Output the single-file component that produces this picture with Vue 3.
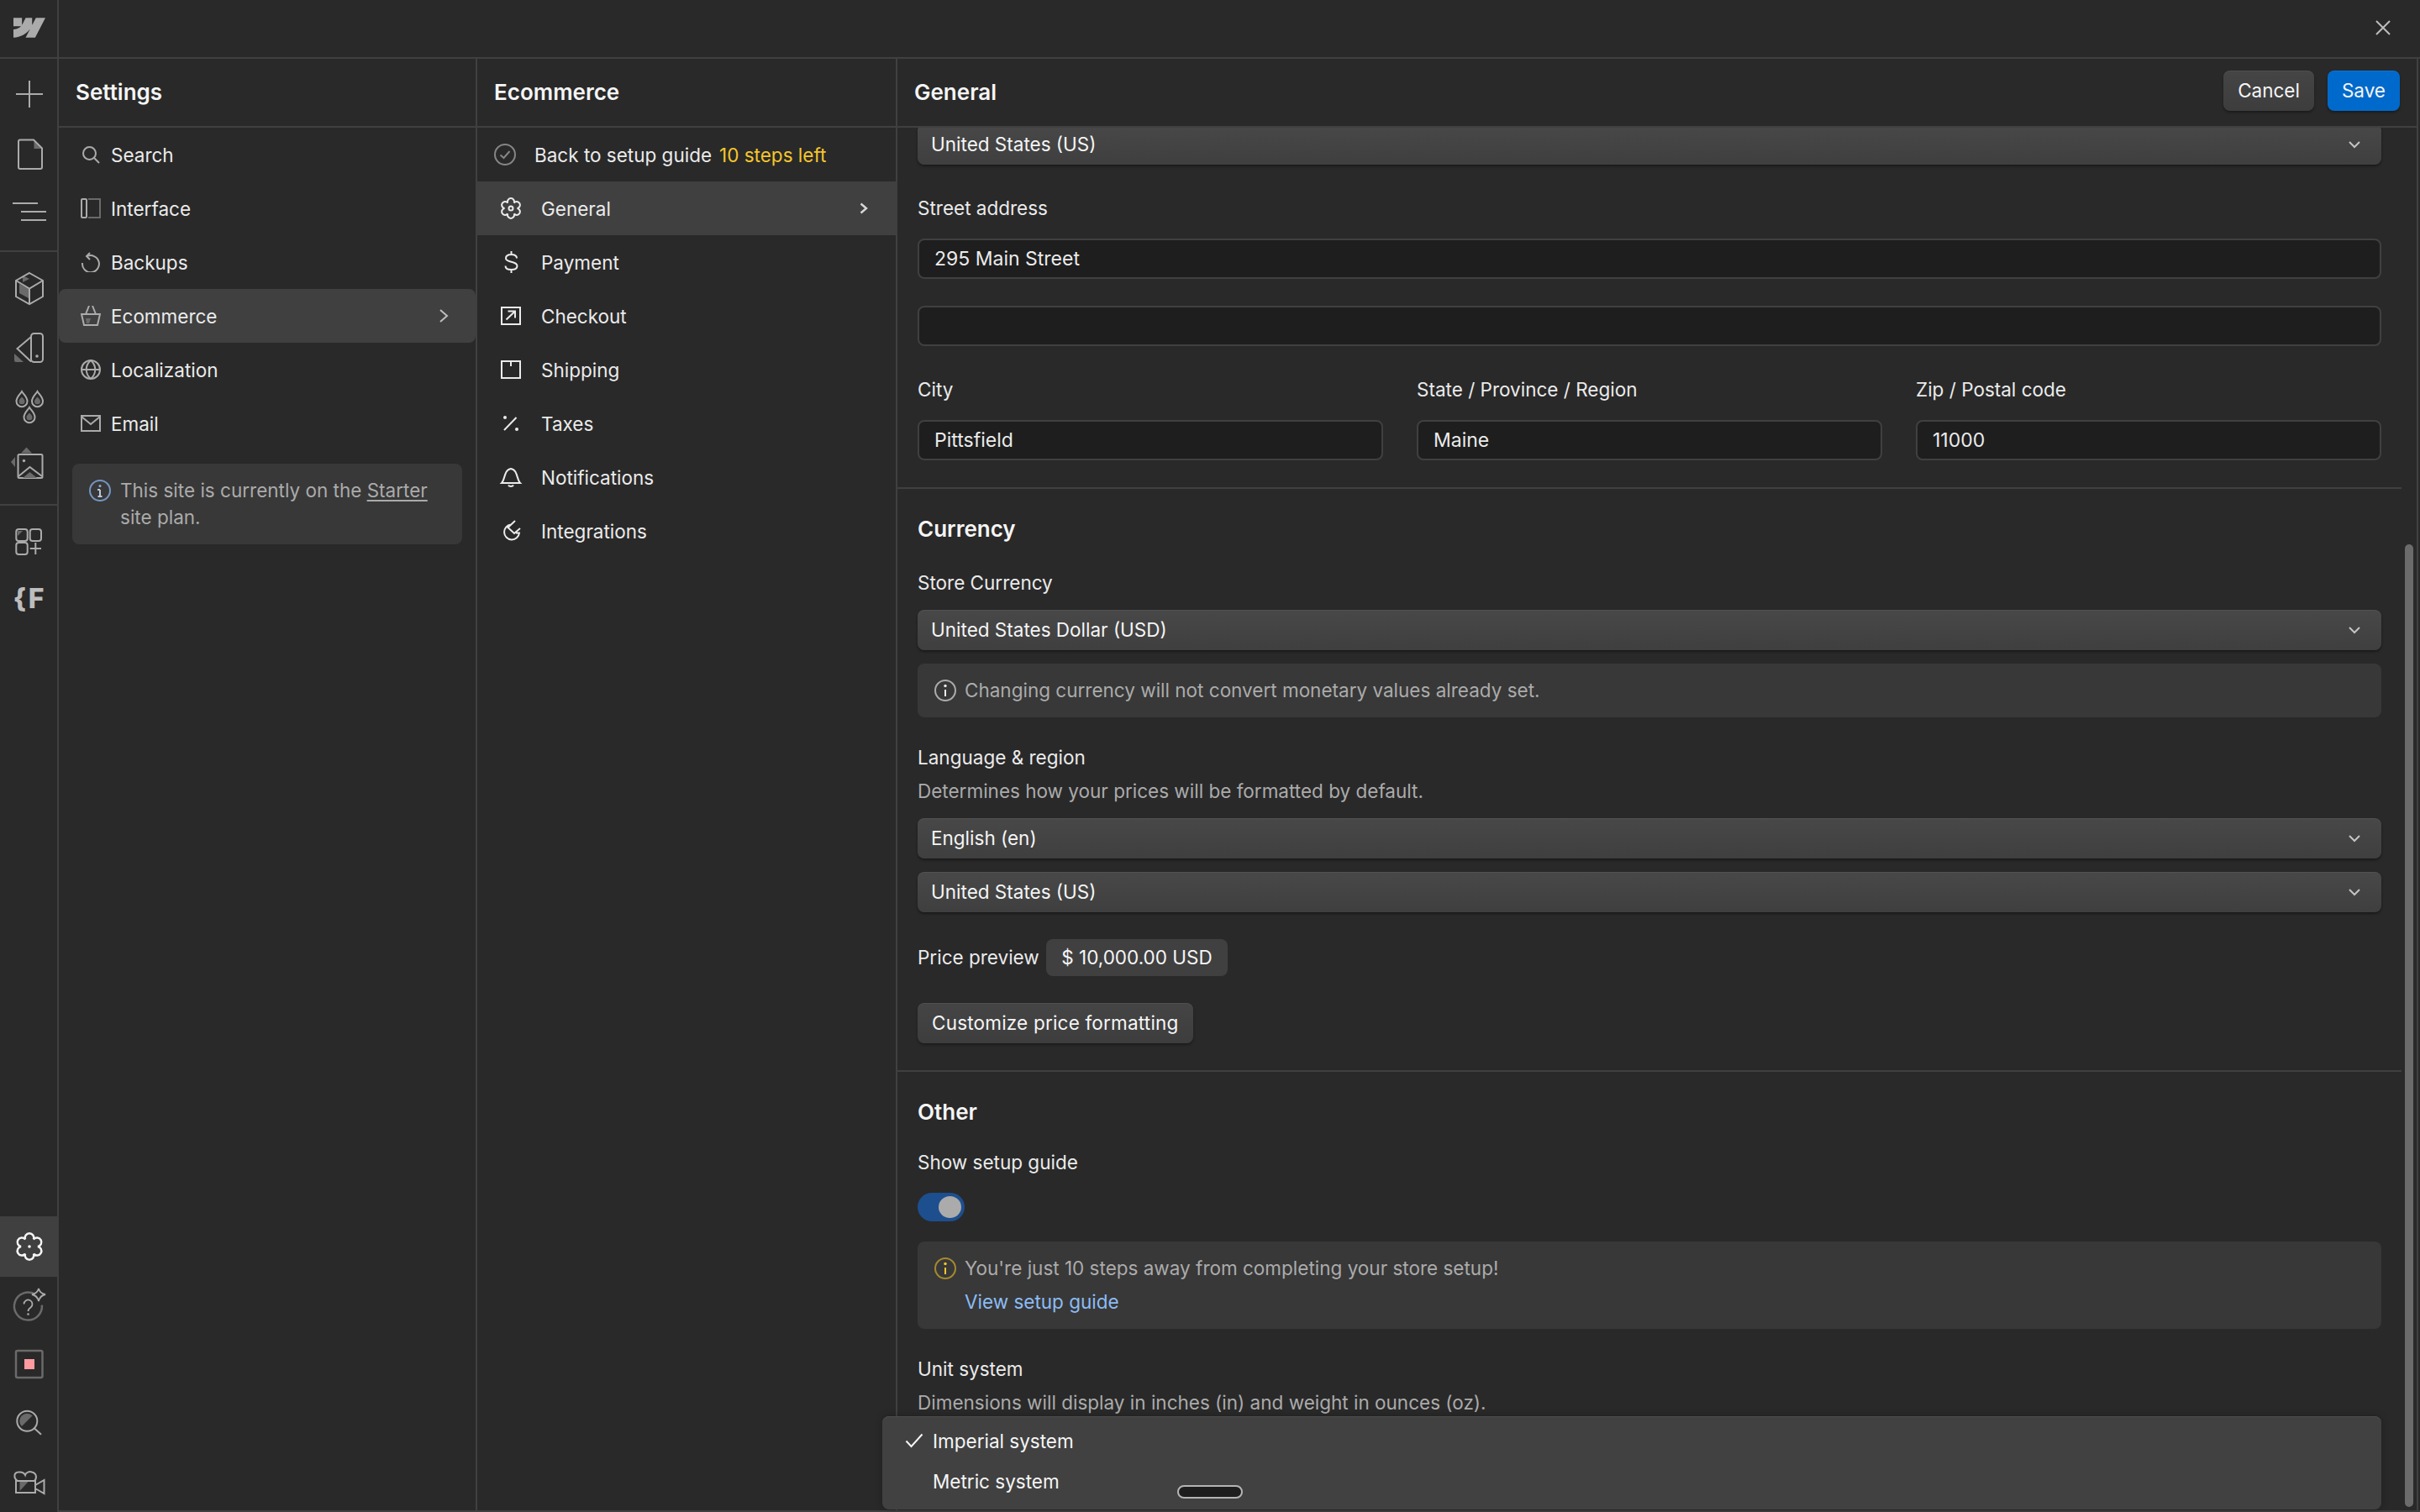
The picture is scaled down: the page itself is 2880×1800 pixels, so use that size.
<script setup>
function gear(cx, cy, r, a) {
  const pts = [];
  for (let i = 0; i < 6; i++) {
    const t = ((-60 + i * 60) * Math.PI) / 180;
    pts.push((cx + r * Math.cos(t)).toFixed(2) + ' ' + (cy + r * Math.sin(t)).toFixed(2));
  }
  let d = 'M' + pts[0];
  for (let i = 1; i <= 6; i++) d += ` A${a} ${a} 0 1 1 ${pts[i % 6]}`;
  return d + 'Z';
}
const railGear = gear(22, 22, 10, 5.3);
const smallGear = gear(12, 12, 7.5, 4);
const drop = 'M0 -9.5C2.5 -5.5 6.5 -3 6.5 2.2A6.5 6.5 0 0 1 -6.5 2.2C-6.5 -3 -2.5 -5.5 0 -9.5Z';
const smallDrop = 'M0 -3C1.5 -1 3.5 0 3.5 2.2A3.5 3.5 0 0 1 -3.5 2.2C-3.5 0 -1.5 -1 0 -3Z';
</script>

<template>
  <div class="app">
    <aside class="rail">
      <div class="rail-logo">
        <svg width="38" height="24" viewBox="0 4.5 24 15"><path class="logo" d="m24 4.515-7.658 14.97H9.149l3.205-6.204h-.144C9.566 16.713 5.621 18.973 0 19.485v-6.118s3.596-.213 5.71-2.435H0V4.515h6.417v5.278l.144-.001 2.622-5.277h4.854v5.244h.144l2.72-5.244H24Z" /></svg>
      </div>
      <div class="rail-group first">
        <div class="rb"><svg viewBox="0 0 44 44"><path d="M22 6V38M6 22H38" /></svg></div>
        <div class="rb"><svg viewBox="0 0 44 44"><path class="f" d="M27.500 6l9 9h-9z" /><path d="M11 4.500H27L37 14.500V37a2 2 0 0 1-2 2H11a2 2 0 0 1-2-2V6.500a2 2 0 0 1 2-2Z" /></svg></div>
        <div class="rb"><svg viewBox="0 0 44 44"><path d="M2 8H32M12 18H42M12 28H42" /></svg></div>
      </div>
      <div class="rail-group">
        <div class="rb"><svg viewBox="0 0 44 44"><path class="f" d="M14 16V8l8 4zM10 18l11 6v11l-11-6z" /><path d="M22 5L38 14V33L22 42L6 33V14ZM6 14L22 23.500L38 14M22 23.500V42" /></svg></div>
        <div class="rb"><svg viewBox="0 0 44 44"><path class="f" d="M4 29L15 39H6a2 2 0 0 1-2-2Z" /><rect x="24" y="5" width="14" height="34" rx="3.500" /><circle class="f2" cx="31" cy="32" r="1.800" /><path d="M24 9L7.500 23L24 38.500" /></svg></div>
        <div class="rb"><svg viewBox="0 0 44 44">
          <g transform="translate(13 11.500)"><path :d="drop" /><path class="f" :d="smallDrop" /></g>
          <g transform="translate(31.500 11.500)"><path :d="drop" /><path class="f" :d="smallDrop" /></g>
          <g transform="translate(22 30.500)"><path :d="drop" /><path class="f" :d="smallDrop" /></g>
        </svg></div>
        <div class="rb"><svg viewBox="0 0 44 44"><path class="f" d="M12 3.500L18.500 -3.500L25 3.500ZM5 8L0 14L5 20Z" /><rect x="8.500" y="5" width="29" height="28" rx="1.500" /><circle class="f2" cx="15.500" cy="12.500" r="1.700" /><path d="M9 31L22.500 20L37 31" /><path class="f" d="M14 33L22.500 26L31 33Z" /></svg></div>
      </div>
      <div class="rail-group last">
        <div class="rb"><svg viewBox="0 0 44 44"><path class="f" d="M8 10H14L8 16Z" /><rect x="6.300" y="8" width="13.400" height="14" rx="3" /><rect x="22.700" y="8" width="13.300" height="14" rx="3" /><rect x="6.300" y="24" width="13.400" height="14" rx="3" /><path d="M29.300 24V38M22.700 31H36" /></svg></div>
        <div class="rb fx"><span>{F</span></div>
      </div>
      <div class="rail-bottom">
        <div class="rb on"><svg viewBox="0 0 44 44"><path class="white" :d="railGear" /><circle class="dot" cx="22" cy="22" r="1.800" /></svg></div>
        <div class="rb s"><svg viewBox="0 0 44 44"><path class="dim" d="M28.700 7.700A16.500 16.500 0 1 0 36.900 20.600" /><path class="thin" d="M15.500 19.500a5 5 0 1 1 8 4c-2 1.300-3 2.200-3 4.500" /><circle class="f2" cx="20.500" cy="31.500" r="1.300" /><path class="thin" d="M33 1C34 5 36 7 41 8C36 9 34 12 33 16C32 12 30 9 25 8C30 7 32 5 33 1Z" /></svg></div>
        <div class="rb s"><svg viewBox="0 0 44 44"><rect class="dim" x="6" y="5" width="31.500" height="32" rx="2" /><rect class="red" x="16" y="15" width="12" height="12" /></svg></div>
        <div class="rb s"><svg viewBox="0 0 44 44"><path class="f" d="M12.900 25.100A9 9 0 0 1 25.700 12.300Z" /><circle cx="19.300" cy="18.700" r="12" /><path d="M27.500 27L36 34.700" /></svg></div>
        <div class="rb s"><svg viewBox="0 0 44 44"><path class="f" d="M10.500 21H20.500L10.500 32Z" /><path d="M6 34H29V20H6ZM29 25L39.500 19V35L29 29M8 20C3 17 3 10 9 9.500C13 9 16 11 17 13C18 9.500 22 8.500 25 9.500C31 11 31 17 28 20" /></svg></div>
      </div>
    </aside>

    <div class="page">
      <header class="topbar">
        <svg class="close" width="20" height="20" viewBox="0 0 20 20"><path d="M2 2L18 18M18 2L2 18" /></svg>
      </header>
      <div class="cols">
        <section class="col col-settings">
          <h2 class="col-head">Settings</h2>
          <nav>
            <div class="nav">
              <svg class="ni" viewBox="0 0 24 24"><circle cx="10.500" cy="10.500" r="7.500" /><path d="M16 16L22 22" /></svg>
              <span>Search</span>
            </div>
            <div class="nav">
              <svg class="ni" viewBox="0 0 24 24"><rect x="1" y="1" width="6" height="22" rx="1" /><path class="dimline" d="M9 1H23V23H9" /></svg>
              <span>Interface</span>
            </div>
            <div class="nav">
              <svg class="ni" viewBox="0 0 24 24"><path d="M11 1L7 5L11 9" /><path d="M7.500 5.200A10 10 0 1 1 2 13" /></svg>
              <span>Backups</span>
            </div>
            <div class="nav active round">
              <svg class="ni" viewBox="0 0 24 24"><path class="f" d="M6 15H12L10 21H7Z" /><path d="M1 10H23L20 23H4ZM6 10L10 0M18 10L14 0" /></svg>
              <span>Ecommerce</span>
              <svg class="chev" viewBox="0 0 12 16"><path d="M2 1L10 8L2 15" /></svg>
            </div>
            <div class="nav">
              <svg class="ni" viewBox="0 0 24 24"><circle cx="12" cy="12" r="11" /><path d="M1 12H23M12 1C5 7 5 17 12 23C19 17 19 7 12 1Z" /></svg>
              <span>Localization</span>
            </div>
            <div class="nav">
              <svg class="ni" viewBox="0 0 24 24"><rect x="1" y="3" width="22" height="18" /><path d="M1 4L12 13L23 4" /></svg>
              <span>Email</span>
            </div>
          </nav>
          <div class="plan">
            <svg class="plan-i" viewBox="0 0 26 26"><circle cx="13" cy="13" r="12" /><path d="M13 12V20M10 12H13M10.500 20H15.500" /><circle class="blue" cx="13" cy="7.500" r="1.500" /></svg>
            <p>This site is currently on the <u>Starter</u> site plan.</p>
          </div>
        </section>

        <section class="col col-ecom">
          <h2 class="col-head">Ecommerce</h2>
          <div class="back">
            <svg class="back-i" viewBox="0 0 26 26"><circle cx="13" cy="13" r="12" /><path d="M7.500 13.500L11.500 17L18.500 9" /></svg>
            <span>Back to setup guide</span>
            <span class="steps">10 steps left</span>
          </div>
          <div class="nav2 active">
            <svg class="ni2" viewBox="0 0 24 24"><path :d="smallGear" /><circle cx="12" cy="12" r="2.500" /></svg>
            <span>General</span>
            <svg class="chev small" viewBox="0 0 12 16"><path d="M2.500 2.500L9 8L2.500 13.500" /></svg>
          </div>
          <div class="nav2">
            <svg class="ni2" viewBox="0 0 24 24"><path d="M19 7.500C19 4 16 3 12.500 3C8.500 3 6 4.500 6 7.500C6 13 19.500 10.500 19.500 16.500C19.500 20 16.500 21 12.500 21C8.500 21 5.500 20 5.500 16.500M12.500 -1V3M12.500 21V25" /></svg>
            <span>Payment</span>
          </div>
          <div class="nav2">
            <svg class="ni2" viewBox="0 0 24 24"><rect x="1" y="2" width="22" height="20" /><path d="M6.500 16.500L16.500 7M8.500 6.500H17V14.500" /></svg>
            <span>Checkout</span>
          </div>
          <div class="nav2">
            <svg class="ni2" viewBox="0 0 24 24"><rect x="1" y="2" width="22" height="20" /><path d="M12 2V8" /></svg>
            <span>Shipping</span>
          </div>
          <div class="nav2">
            <svg class="ni2" viewBox="0 0 24 24"><path d="M4 20L18.500 5" /><circle class="dotf" cx="5" cy="5" r="2" /><circle class="dotf" cx="19" cy="19" r="2" /></svg>
            <span>Taxes</span>
          </div>
          <div class="nav2">
            <svg class="ni2" viewBox="0 0 24 24"><path d="M1 19H23C19 15 20 3 12 2C4 3 5 15 1 19ZM9 21.500C10 23.500 14 23.500 15 21.500" /></svg>
            <span>Notifications</span>
          </div>
          <div class="nav2">
            <svg class="ni2" viewBox="0 0 24 24"><path d="M12 4.500A9 9 0 1 0 22 14.500H18M17 0L8.500 8L16 15L23 9" /></svg>
            <span>Integrations</span>
          </div>
        </section>

        <main class="col-main">
          <header class="main-head">
            <h2 class="main-title">General</h2>
            <div class="actions">
              <button class="btn">Cancel</button>
              <button class="btn primary">Save</button>
            </div>
          </header>
          <div class="scroll">
            <div class="content">
              <section class="sec sec1">
                <div class="sel clip">United States (US)<svg class="sel-c" viewBox="0 0 14 10"><path d="M1 2L7 8L13 2" /></svg></div>
                <label class="lab street">Street address</label>
                <div class="inp">295 Main Street</div>
                <div class="inp second"></div>
                <div class="tri">
                  <div><label class="lab">City</label><div class="inp">Pittsfield</div></div>
                  <div><label class="lab">State / Province / Region</label><div class="inp">Maine</div></div>
                  <div><label class="lab">Zip / Postal code</label><div class="inp">11000</div></div>
                </div>
              </section>
              <section class="sec sec2">
                <h3 class="h">Currency</h3>
                <label class="lab mt24">Store Currency</label>
                <div class="sel mt12">United States Dollar (USD)<svg class="sel-c" viewBox="0 0 14 10"><path d="M1 2L7 8L13 2" /></svg></div>
                <div class="info one mt16">
                  <svg class="info-i" viewBox="0 0 26 26"><circle cx="13" cy="13" r="12" /><path d="M13 12V20" /><circle class="gf" cx="13" cy="7.500" r="1.700" /></svg>
                  <span>Changing currency will not convert monetary values already set.</span>
                </div>
                <label class="lab mt28">Language &amp; region</label>
                <p class="desc">Determines how your prices will be formatted by default.</p>
                <div class="sel mt12">English (en)<svg class="sel-c" viewBox="0 0 14 10"><path d="M1 2L7 8L13 2" /></svg></div>
                <div class="sel mt16">United States (US)<svg class="sel-c" viewBox="0 0 14 10"><path d="M1 2L7 8L13 2" /></svg></div>
                <div class="price"><span>Price preview</span><span class="pill">$ 10,000.00 USD</span></div>
                <button class="btn custom">Customize price formatting</button>
              </section>
              <section class="sec sec3">
                <h3 class="h">Other</h3>
                <label class="lab mt20">Show setup guide</label>
                <div class="toggle"><span class="knob"></span></div>
                <div class="info two">
                  <svg class="info-i yellow" viewBox="0 0 26 26"><circle cx="13" cy="13" r="12" /><path d="M13 12V20" /><circle class="yf" cx="13" cy="7.500" r="1.700" /></svg>
                  <div>
                    <div class="it">You're just 10 steps away from completing your store setup!</div>
                    <div class="it link">View setup guide</div>
                  </div>
                </div>
                <label class="lab mt28">Unit system</label>
                <p class="desc">Dimensions will display in inches (in) and weight in ounces (oz).</p>
              </section>
            </div>
            <div class="bar"></div>
          </div>
          <div class="menu">
            <div class="opt"><svg class="tick" viewBox="0 0 22 18"><path d="M1.500 9.500L7.500 16L20.500 1.500" /></svg>Imperial system</div>
            <div class="opt">Metric system</div>
            <span class="scrub"></span>
          </div>
        </main>
      </div>
    </div>
  </div>
</template>

<style>
html, body { margin: 0; background: #292929; }
</style>

<style scoped>
* { box-sizing: border-box; }
.app {
  width: 2880px; height: 1800px; display: flex; overflow: hidden;
  background: #292929; color: #ebebeb;
  font-family: Inter, "Liberation Sans", sans-serif; font-size: 22.5px; line-height: 40px;
}
.rail { width: 70px; flex: none; height: 1800px; border-right: 2px solid #404040; display: flex; flex-direction: column; }
.rail-logo { height: 70px; flex: none; border-bottom: 2px solid #404040; display: flex; align-items: center; justify-content: center; width: 68px; padding: 0 0 2px 2px; }
.logo { fill: #ababab; }
.rail-group { padding: 6px 0; border-bottom: 2px solid #404040; }
.rail-group.last { border-bottom: none; }
.rb { height: 72px; display: flex; align-items: center; justify-content: center; padding-left: 2px; }
.rb.s { height: 70px; }
.rb svg { width: 44px; height: 44px; overflow: visible; fill: none; stroke: #ababab; stroke-width: 2; }
.rb .f { fill: #6a6a6a; stroke: none; }
.rb .f2 { fill: #ababab; stroke: none; }
.rb .dim { stroke: #6a6a6a; stroke-width: 2.5; }
.rb .thin { stroke: #ababab; stroke-width: 1.8; }
.rb .red { fill: #ff9ba0; stroke: none; }
.rb .white { stroke: #f5f5f5; stroke-width: 2.5; }
.rb .dot { fill: #f5f5f5; stroke: none; }
.rb.on { background: #404040; }
.fx span { color: #bdbdbd; font-family: Inter, sans-serif; font-weight: 800; font-size: 32px; letter-spacing: 2px; padding-bottom: 6px; line-height: 40px; }
.rail-bottom { margin-top: auto; }

.page { flex: 1; min-width: 0; height: 1800px; display: flex; flex-direction: column; }
.topbar { height: 70px; flex: none; border-bottom: 2px solid #404040; display: flex; align-items: center; justify-content: flex-end; padding: 0 34px 2px 0; }
.close { fill: none; stroke: #bdbdbd; stroke-width: 2; }
.cols { flex: 1; min-height: 0; display: flex; border-bottom: 2px solid #404040; }
.col { flex: none; border-right: 2px solid #404040; }
.col-settings { width: 498px; }
.col-ecom { width: 500px; }
.col-head {
  margin: 0; height: 82px; border-bottom: 2px solid #404040; padding: 0 0 1px 20px;
  font-size: 26px; font-weight: 600; color: #f5f5f5; display: flex; align-items: center;
}
.nav, .nav2 { height: 64px; display: flex; align-items: center; color: #ebebeb; }
.nav span, .nav2 span, .back span { padding-top: 2px; }
.nav { padding-left: 26px; }
.nav.round { border-radius: 8px; }
.active { background: #404040; }
.ni { width: 24px; height: 24px; flex: none; margin-right: 12px; fill: none; stroke: #ababab; stroke-width: 2; }
.ni .f { fill: #6a6a6a; stroke: none; }
.ni .dimline { stroke: #6a6a6a; }
.chev { width: 12px; height: 16px; fill: none; stroke: #bdbdbd; stroke-width: 2; margin-left: auto; margin-right: 32px; }
.chev.small { margin-right: 32px; stroke: #d8d8d8; stroke-width: 2.4; }
.plan {
  margin: 16px 16px 0; height: 96px; padding: 16px 20px 0; background: #383838; border-radius: 8px;
  display: flex; gap: 11px; color: #ababab; line-height: 32px;
}
.plan p { margin: 0; }
.plan u { text-underline-offset: 3px; }
.plan-i { width: 26px; height: 26px; flex: none; margin-top: 3px; fill: none; stroke: #7fa7d9; stroke-width: 2; opacity: .85; }
.plan-i .blue { fill: #9ec5f5; stroke: none; }
.plan-i path { stroke: #cfe1f7; }
.back { height: 64px; display: flex; align-items: center; padding-left: 20px; }
.back-i { width: 26px; height: 26px; flex: none; margin-right: 22px; fill: none; stroke: #858585; stroke-width: 2; }
.steps { color: #f5c62d; margin-left: 9px; }
.nav2 { padding-left: 28px; }
.ni2 { width: 24px; height: 24px; flex: none; margin-right: 24px; fill: none; stroke: #ebebeb; stroke-width: 2; overflow: visible; }
.ni2 .dotf { fill: #ebebeb; stroke: none; }

.col-main { flex: 1; min-width: 0; position: relative; display: flex; flex-direction: column; margin-right: 2px; border-right: 2px solid #404040; }
.main-head { height: 82px; flex: none; border-bottom: 2px solid #404040; display: flex; align-items: center; justify-content: space-between; padding: 0 20px; }
.main-title { margin: 0; font-size: 26px; font-weight: 600; color: #f5f5f5; padding-bottom: 1px; }
.actions { display: flex; gap: 16px; padding-bottom: 4px; }
.btn {
  height: 48px; padding: 0 17px; font: inherit; color: #f5f5f5; border: 0; border-radius: 8px;
  background: linear-gradient(#454545, #3d3d3d);
  box-shadow: 0 2px 3px rgba(0,0,0,.35), inset 0 1px 0 rgba(255,255,255,.06);
}
.primary { background: #006acc; }
.scroll { flex: 1; min-height: 0; position: relative; overflow: hidden; }
.content { margin-top: -4px; width: 1790px; }
.sec { padding: 0 24px 32px; border-bottom: 2px solid #404040; }
.sec2, .sec3 { padding-top: 28px; }
.sec3 { border-bottom: none; }
.lab { display: block; height: 40px; line-height: 40px; color: #ebebeb; }
.street { margin-top: 32px; margin-bottom: 16px; }
.mt12 { margin-top: 12px; } .mt16 { margin-top: 16px; } .mt20 { margin-top: 20px; } .mt24 { margin-top: 24px; } .mt28 { margin-top: 28px; }
.sel {
  height: 48px; padding: 0 16px; border-radius: 8px; display: flex; align-items: center; justify-content: space-between;
  background: linear-gradient(#484848, #3f3f3f); color: #f5f5f5;
  box-shadow: 0 2px 3px rgba(0,0,0,.4), inset 0 1px 0 rgba(255,255,255,.06);
}
.sel-c { width: 14px; height: 10px; fill: none; stroke: #c4c4c4; stroke-width: 2; margin-right: 9px; }
.inp {
  height: 48px; padding: 0 18px; border-radius: 8px; background: #1e1e1e; border: 2px solid #404040;
  display: flex; align-items: center; color: #ebebeb; font-size: 23px;
}
.second { margin-top: 32px; }
.tri { display: grid; grid-template-columns: repeat(3, 554px); column-gap: 40px; margin-top: 32px; }
.tri .lab { margin-bottom: 16px; }
.h { margin: 0; height: 40px; font-size: 26px; font-weight: 600; color: #f5f5f5; }
.info { background: #383838; border-radius: 8px; display: flex; color: #ababab; }
.info.one { height: 64px; align-items: center; padding: 0 20px; gap: 10px; }
.info-i { width: 26px; height: 26px; flex: none; fill: none; stroke: #ababab; stroke-width: 2; }
.info-i .gf { fill: #ebebeb; stroke: none; }
.info-i path { stroke: #ebebeb; }
.info-i.yellow { stroke: #a48a2e; }
.info-i.yellow path { stroke: #f5c62d; }
.info-i .yf { fill: #f5c62d; stroke: none; }
.info.two { height: 104px; margin-top: 24px; padding: 12px 20px; gap: 10px; }
.info.two .info-i { margin-top: 7px; }
.it { height: 40px; }
.link { color: #8cbcf5; }
.desc { margin: 0; height: 40px; color: #ababab; }
.price { display: flex; align-items: center; gap: 8px; margin-top: 32px; height: 44px; }
.pill { height: 44px; line-height: 44px; padding: 0 18.5px; background: #404040; border-radius: 8px; color: #f5f5f5; }
.custom { display: block; margin-top: 32px; letter-spacing: .2px; }
.toggle { width: 56px; height: 34px; border-radius: 17px; margin-top: 16px; background: #1d4f8f; position: relative; }
.knob { position: absolute; left: 25px; top: 4px; width: 27px; height: 26px; border-radius: 50%; background: #ababab; }
.bar { position: absolute; top: 496px; bottom: 4px; right: 4px; width: 10px; border-radius: 5px; background: #6b6b6b; }
.menu {
  position: absolute; left: -18px; top: 1616px; width: 1784px; height: 111px; padding: 6px 0;
  background: #414141; border-radius: 8px; color: #f5f5f5;
  box-shadow: 0 0 8px rgba(0,0,0,.25), inset 0 1px 0 #4d4d4d;
}
.opt { height: 48px; display: flex; align-items: center; padding-left: 60px; position: relative; }
.tick { position: absolute; left: 27px; top: 14px; width: 22px; height: 18px; fill: none; stroke: #f5f5f5; stroke-width: 2; }
.scrub { position: absolute; left: 351px; top: 82px; width: 78px; height: 16px; border-radius: 8px; background: #1e1e1e; border: 2px solid #b5b5b5; }
</style>
